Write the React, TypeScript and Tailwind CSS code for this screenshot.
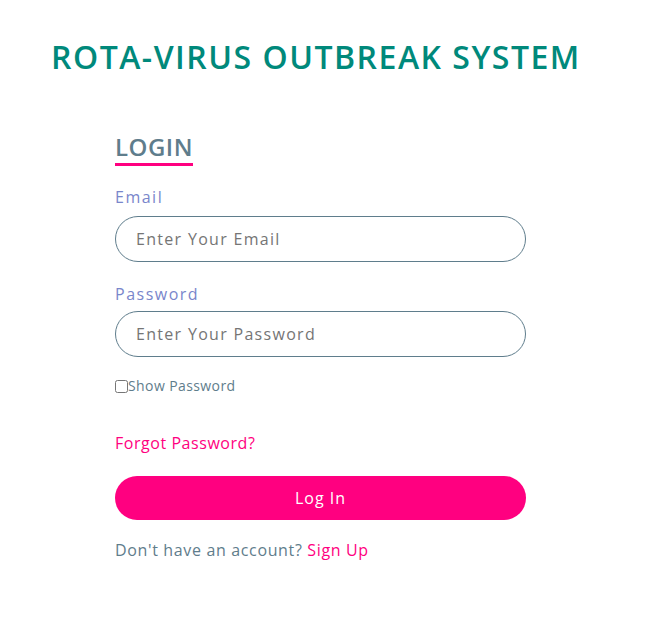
import React, { useState } from 'react';

const App: React.FC = () => {
  // Toggle password visibility
  const [showPassword, setShowPassword] = useState(false);

  return (
    <div className="min-h-screen bg-white font-['Open_Sans',_sans-serif]">
      <h1 className="pl-[51px] pt-[37px] text-[32px] leading-[40px] font-semibold tracking-[1.5px] text-[#00897b]">
        ROTA-VIRUS OUTBREAK SYSTEM
      </h1>

      <div className="ml-[115px] mt-[55px] w-[411px] flex flex-col">
        <div className="flex flex-col items-start">
          <h2 className="text-[24px] leading-[30px] font-semibold tracking-[0.5px] text-[#5f7d8c]">LOGIN</h2>
          <div className="h-[3px] w-[78px] bg-[#ff0080] mt-[1px]" />
        </div>

        <label className="mt-[21px] text-[16px] leading-[20px] tracking-[1.5px] text-[#7986cb]">Email</label>
        <input
          type="email"
          placeholder="Enter Your Email"
          className="mt-[9px] h-[46px] w-full rounded-full border border-[#5f7d8c] px-5 text-[16px] tracking-[1.3px] text-[#444] placeholder:text-[#757575] outline-none"
        />

        <label className="mt-[22px] text-[16px] leading-[20px] tracking-[1.5px] text-[#7986cb]">Password</label>
        <input
          type={showPassword ? 'text' : 'password'}
          placeholder="Enter Your Password"
          className="mt-[7px] h-[46px] w-full rounded-full border border-[#5f7d8c] px-5 text-[16px] tracking-[1.3px] text-[#444] placeholder:text-[#757575] outline-none"
        />

        <label className="mt-[20px] flex items-center text-[14px] leading-[18px] tracking-[0.4px] text-[#5f7d8c]">
          <input
            type="checkbox"
            checked={showPassword}
            onChange={() => setShowPassword(!showPassword)}
            className="m-0 h-[13px] w-[13px]"
          />
          Show Password
        </label>

        <a href="#" className="mt-[38px] text-[16px] leading-[20px] tracking-[0.55px] text-[#ff0080]">Forgot Password?</a>

        <button className="mt-[23px] h-[44px] w-full rounded-full bg-[#ff0080] text-[16px] font-medium tracking-[1px] text-white">
          Log In
        </button>

        <p className="mt-[20px] text-[16px] leading-[20px] tracking-[0.65px] text-[#5f7d8c]">
          Don't have an account? <a href="#" className="text-[#ff0080]">Sign Up</a>
        </p>
      </div>
    </div>
  );
};

export default App;
